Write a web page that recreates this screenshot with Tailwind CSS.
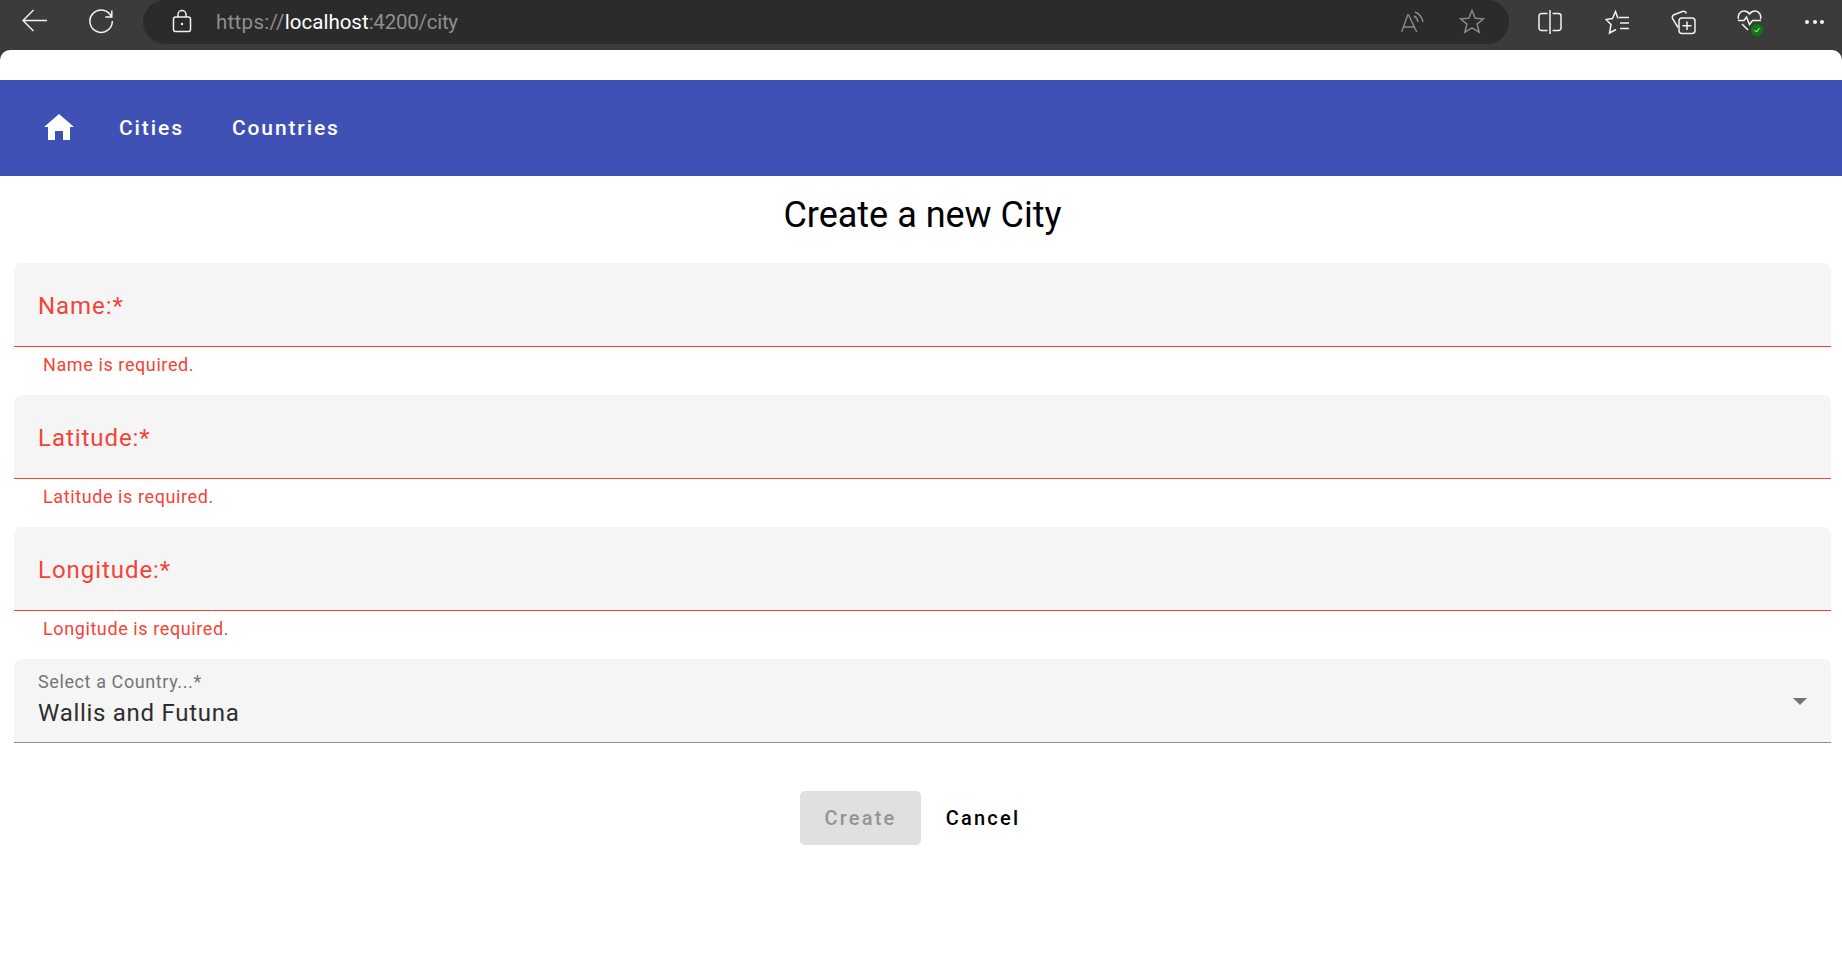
<!DOCTYPE html>
<html lang="en">
<head>
<meta charset="utf-8">
<title>City</title>
<script src="https://cdn.jsdelivr.net/npm/@tailwindcss/browser@4"></script>
</head>
<body class="h-[977px] overflow-hidden bg-[#3b3b3b] font-['Roboto',sans-serif]">
    <!-- Browser toolbar -->
    <div class="flex h-[50px] items-start">
        <div class="flex h-[44px] w-[143px] shrink-0 items-center gap-[40px] pb-[2px] pl-[22px]">
            <svg width="26" height="24" viewBox="0 0 26 24" fill="none" stroke="#f2f2f2" stroke-width="1.5"><path d="M1 11.5H25M11.5 1L1 11.5 11.5 22"/></svg>
            <svg width="26" height="26" viewBox="0 0 26 26" fill="none" stroke="#f2f2f2" stroke-width="1.5"><path d="M23.5 9A11.2 11.2 0 1 0 24.300 13M23.800 2.500V9H17.300"/></svg>
        </div>
        <div class="flex h-[44px] w-[1366px] shrink-0 items-center rounded-[22px] bg-[#2b2b2b] pr-[24px] pl-[29px]">
            <svg class="mb-[2px]" width="20" height="24" viewBox="0 0 20 24" fill="none" stroke="#f2f2f2" stroke-width="1.500"><rect x="1.500" y="8" width="17" height="14.500" rx="2"/><path d="M6 8V5.500a4 4 0 0 1 8 0V8"/><circle cx="10" cy="15" r="1.200" fill="#f2f2f2" stroke="none"/></svg>
            <div class="ml-[24px] text-[20.500px] text-[#8e8e8e]"><span class="tracking-[.3px]">https://</span><span class="text-white">localhost</span><span class="tracking-[-.25px]">:4200/city</span></div>
            <svg class="ml-auto" width="24" height="24" viewBox="0 0 24 24" fill="none" stroke="#8a8a8a" stroke-width="1.400"><path d="M.7 22L6.700 5H7.700L15.700 22M3 17H13.500M13 6C15 7 16.500 9 17 12M14 2C18 3.500 21 7 22 12"/></svg>
            <svg class="mb-[2px] ml-[34px]" width="26" height="25" viewBox="0 0 26 25" fill="none" stroke="#8a8a8a" stroke-width="1.500"><path d="M13 1.500L16.200 9.200L24.500 9.800L18.100 15.100L20.200 23.200L13 18.800L5.800 23.200L7.900 15.100L1.500 9.800L9.800 9.200Z"/></svg>
        </div>
        <div class="flex h-[44px] flex-1 items-center pl-[29px] text-[#f2f2f2]">
            <svg width="24" height="26" viewBox="0 0 24 26" fill="none" stroke="currentColor" stroke-width="1.500"><path d="M9.500 4.500H3.500A2.500 2.500 0 0 0 1 7V19A2.500 2.500 0 0 0 3.500 21.500H9.500M14.500 4.500H20.500A2.500 2.500 0 0 1 23 7V19A2.500 2.500 0 0 1 20.500 21.500H14.500M12 1V25"/></svg>
            <svg class="ml-[43px]" width="25" height="25" viewBox="0 0 25 25" fill="none" stroke="currentColor" stroke-width="1.500"><path d="M13 8.500L10.500 1.500L7.500 8.500L1 9.500L6 14.500L4.500 23L11 19.500M14 7.500H24M15 13H24M15 18.500H24"/></svg>
            <svg class="ml-[41px]" width="25" height="25" viewBox="0 0 25 25" fill="none" stroke="currentColor" stroke-width="1.500"><path d="M7 17.500L1.500 8.500C1 6.500 1.500 5 3.500 4.500L11.500 1.500C13.500 1 15 2 15.500 3.500"/><rect x="8" y="8" width="16" height="15.500" rx="3"/><path d="M16 11.500V20M11.500 15.700H20.500"/></svg>
            <div class="relative ml-[41px] h-[27px] w-[25px]">
                <svg width="25" height="25" viewBox="0 0 25 25" fill="none" stroke="currentColor" stroke-width="1.500"><path d="M1.500 10C.5 6 3 2 7 2C9.500 2 11.500 3.500 12.500 5C13.500 3.500 15.500 2 18 2C22 2 24.500 6 23.500 10M1 11.500H7L9.500 8L12.500 15.500L15.500 11.500H24M5 15L11 21"/></svg>
                <span class="absolute right-[-1px] bottom-0 flex h-[12px] w-[12px] items-center justify-center rounded-full bg-[#0f7b0f]">
                    <svg width="8" height="8" viewBox="0 0 8 8" fill="none" stroke="#d8efd8" stroke-width="1"><path d="M1.500 4L3.500 6L6.500 2"/></svg>
                </span>
            </div>
            <div class="ml-[43px] flex gap-[3.500px]">
                <span class="h-[4px] w-[4px] rounded-full bg-[#f2f2f2]"></span>
                <span class="h-[4px] w-[4px] rounded-full bg-[#f2f2f2]"></span>
                <span class="h-[4px] w-[4px] rounded-full bg-[#f2f2f2]"></span>
            </div>
        </div>
    </div>

    <!-- Page -->
    <div class="h-[927px] rounded-t-[10px] bg-white pt-[30px]">
        <nav class="flex h-[96px] items-center bg-[#3f51b5] pl-[44px] text-white">
            <svg class="mb-[2px]" width="30" height="26" viewBox="0 0 30 26" fill="white"><path d="M15 0L30 13H26V26H19V17H11V26H4V13H0Z"/></svg>
            <a class="ml-[45px] pt-[2px] text-[21px] font-medium tracking-[1.900px]">Cities</a>
            <a class="ml-[48px] pt-[2px] text-[21px] font-medium tracking-[1.900px]">Countries</a>
        </nav>

        <h1 class="mt-[18px] h-[42px] pl-[3px] text-center text-[36px] leading-[42px] text-black">Create a new City</h1>

        <form class="mt-[27px] pr-[11px] pl-[14px]">
            <div class="flex h-[84px] items-center rounded-t-[7px] border-b-[1.500px] border-[#f44336] bg-[#f5f5f5] pt-[2px] pl-[24px] text-[24px] tracking-[.95px] text-[#f44336]">Name:*</div>
            <div class="h-[48px] pt-[6px] pl-[29px] text-[18px] leading-[24px] tracking-[.6px] text-[#f44336]">Name is required.</div>

            <div class="flex h-[84px] items-center rounded-t-[7px] border-b-[1.500px] border-[#f44336] bg-[#f5f5f5] pt-[2px] pl-[24px] text-[24px] tracking-[.95px] text-[#f44336]">Latitude:*</div>
            <div class="h-[48px] pt-[6px] pl-[29px] text-[18px] leading-[24px] tracking-[.6px] text-[#f44336]">Latitude is required.</div>

            <div class="flex h-[84px] items-center rounded-t-[7px] border-b-[1.500px] border-[#f44336] bg-[#f5f5f5] pt-[2px] pl-[24px] text-[24px] tracking-[.95px] text-[#f44336]">Longitude:*</div>
            <div class="h-[48px] pt-[6px] pl-[29px] text-[18px] leading-[24px] tracking-[.6px] text-[#f44336]">Longitude is required.</div>

            <div class="flex h-[84px] items-center rounded-t-[7px] border-b-[1.500px] border-[#8c8c8c] bg-[#f5f5f5] px-[24px]">
                <div class="self-start pt-[11px]">
                    <div class="text-[18px] leading-[24px] tracking-[.6px] text-[#757575]">Select a Country...*</div>
                    <div class="mt-[3px] text-[24px] leading-[32px] tracking-[.72px] text-[#2e2e2e]">Wallis and Futuna</div>
                </div>
                <span class="mt-[1px] ml-auto h-0 w-0 border-x-[7px] border-t-[7px] border-x-transparent border-t-[#757575]"></span>
            </div>

            <div class="mt-[48px] flex justify-center">
                <button type="button" class="h-[54px] w-[121px] rounded-[5px] bg-[#e0e0e0] text-[20px] font-medium tracking-[2.200px] text-[#949494]">Create</button>
                <button type="button" class="h-[54px] w-[124px] rounded-[5px] text-[20px] font-medium tracking-[2.200px] text-black">Cancel</button>
            </div>
        </form>
    </div>
</body>
</html>
